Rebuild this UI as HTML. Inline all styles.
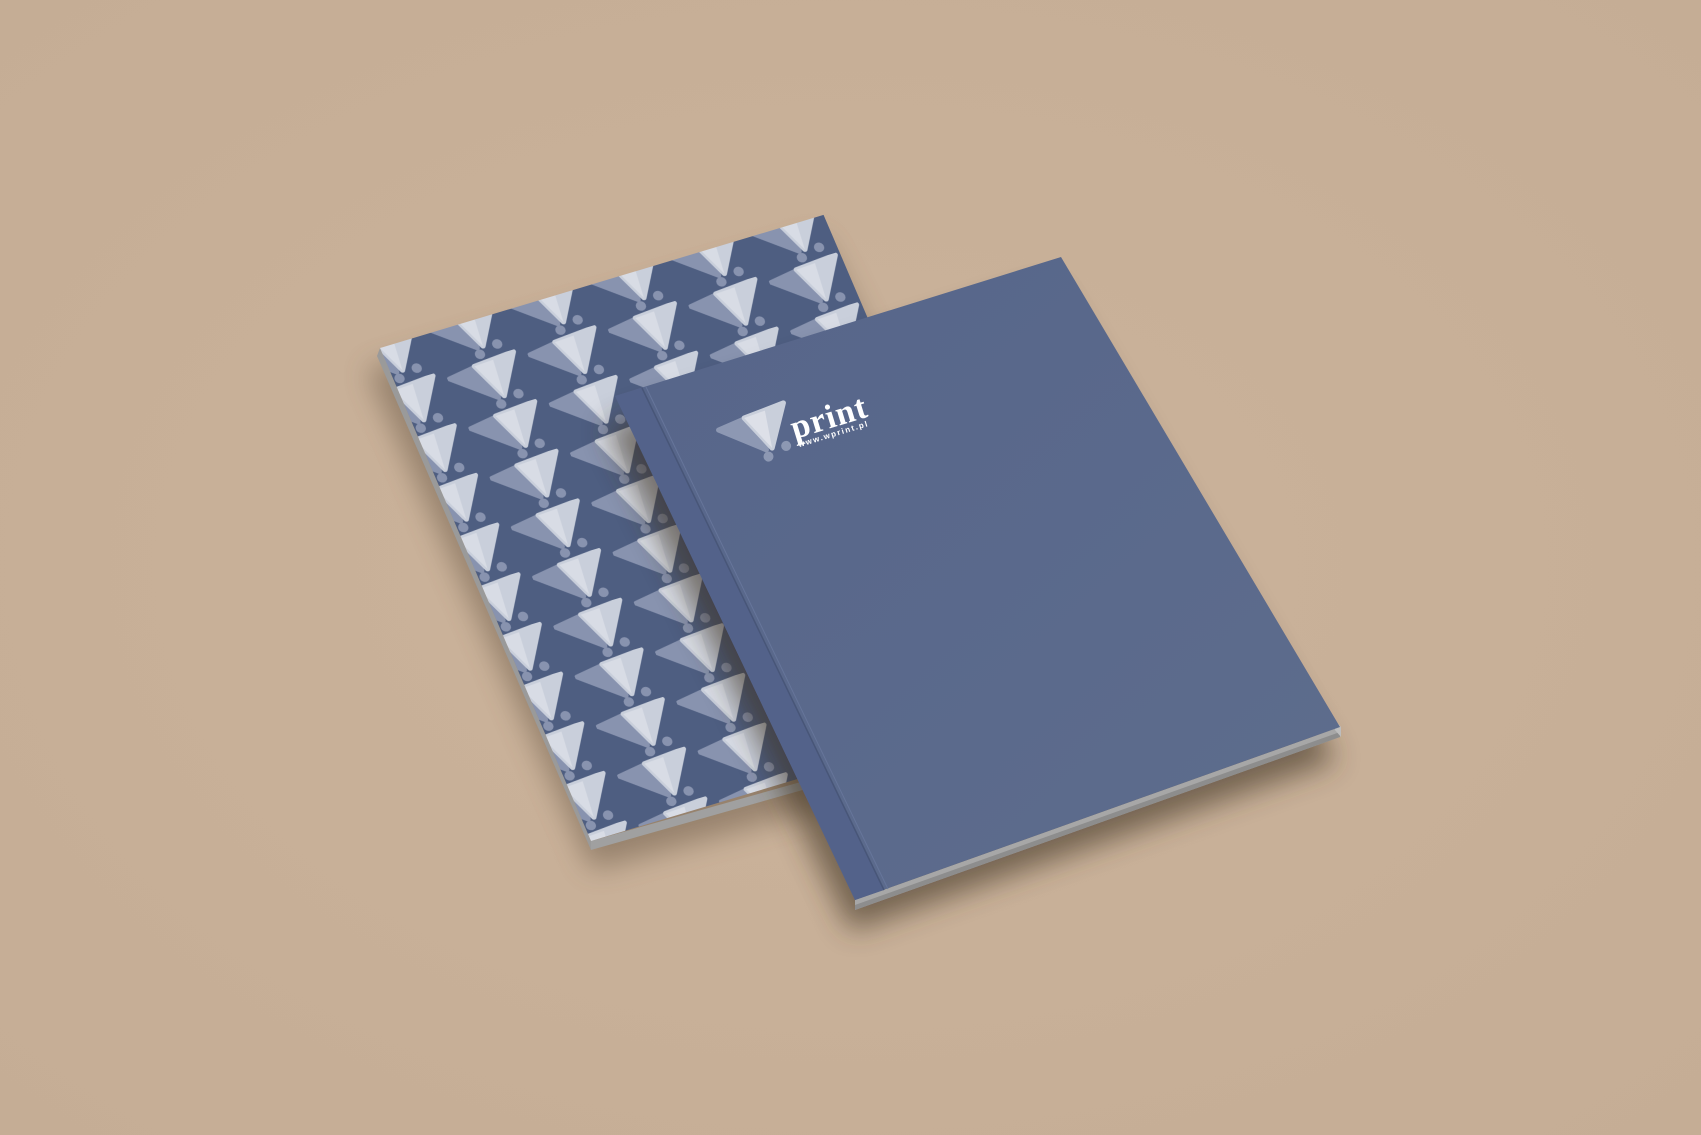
<!DOCTYPE html>
<html><head><meta charset="utf-8"><style>
html,body{margin:0;padding:0;background:#c8b098;}
svg{display:block}
</style></head><body>
<svg width="1701" height="1135" viewBox="0 0 1701 1135" xmlns="http://www.w3.org/2000/svg">
<defs>
<radialGradient id="bg" cx="50%" cy="50%" r="70%">
<stop offset="0" stop-color="#cbb39b"/><stop offset="1" stop-color="#c5ad95"/>
</radialGradient>
<filter id="sh" x="-20%" y="-20%" width="140%" height="140%"><feGaussianBlur stdDeviation="14"/></filter>
<pattern id="pat" patternUnits="userSpaceOnUse" width="84" height="54" patternTransform="translate(-34,-14)">
<rect width="84" height="54" fill="#4e5e81"/>
<polygon points="2,10 44,4 40,42" fill="#8893af" stroke="#8893af" stroke-width="5" stroke-linejoin="round"/>
<polygon points="30,5 72,2 46,42" fill="#c9cfdb" stroke="#c9cfdb" stroke-width="5" stroke-linejoin="round"/>
<polygon points="30,5 50,4 46,42" fill="#d8dce5"/>
<circle cx="40" cy="49" r="5" fill="#8893af"/>
<circle cx="60" cy="44" r="5" fill="#8893af"/>
</pattern>
<linearGradient id="cov" x1="0" y1="0" x2="1" y2="1">
<stop offset="0" stop-color="#56658a"/><stop offset="1" stop-color="#5e6d8d"/>
</linearGradient>
</defs>
<rect width="1701" height="1135" fill="url(#bg)"/>
<polygon points="375,360 830,228 1075,730 600,860" fill="#5a4a38" opacity="0.45" filter="url(#sh)" transform="translate(-8,10)"/>
<polygon points="380,348 591,841 591,850 377,356" fill="#9a9a9a"/>
<polygon points="591,841 1064,708 1064,716 591,850" fill="#a0a0a0"/>
<g transform="matrix(0.958,-0.2876,0.3937,0.9198,380,348)">
<rect x="0" y="0" width="463" height="536" fill="url(#pat)"/>
</g>
<polygon points="620,410 1065,270 1350,745 865,915" fill="#3e3024" opacity="0.6" filter="url(#sh)" transform="translate(-14,16)"/>
<polygon points="855,900 1340,727 1340,737 855,910" fill="#a7a7a7"/>
<polygon points="855,905 1340,732 1340,737 855,910" fill="#8d8d8d"/>
<polygon points="1335,720 1341,727 1341,737 1335,730" fill="#bdbdbd"/>
<polygon points="615,396 1061,257 1340,727 855,900" fill="url(#cov)"/>
<polygon points="615,396 642,388 884,890 855,900" fill="#53628a"/>
<line x1="642" y1="388" x2="884" y2="890" stroke="#485678" stroke-width="1.5"/>
<line x1="646" y1="387" x2="888" y2="889" stroke="#66759a" stroke-width="1"/>
<g transform="translate(714,422) rotate(-17)">
<polygon points="2,9 46,4 42,42" fill="#8d98b3" stroke="#8d98b3" stroke-width="5" stroke-linejoin="round"/>
<polygon points="30,5 72,2 48,42" fill="#c9cfdb" stroke="#c9cfdb" stroke-width="5" stroke-linejoin="round"/>
<polygon points="30,5 52,4 48,42" fill="#dde0e8"/>
<circle cx="42" cy="49" r="5" fill="#8d98b3"/>
<circle cx="62" cy="44" r="5" fill="#8d98b3"/>
<text x="72" y="40" font-family="Liberation Serif, serif" font-weight="bold" font-size="34" fill="#ffffff" letter-spacing="1">print</text>
<text x="74" y="49" font-family="Liberation Sans, sans-serif" font-weight="bold" font-size="8" fill="#ffffff" letter-spacing="1.5">www.wprint.pl</text>
</g>
</svg>
</body></html>
